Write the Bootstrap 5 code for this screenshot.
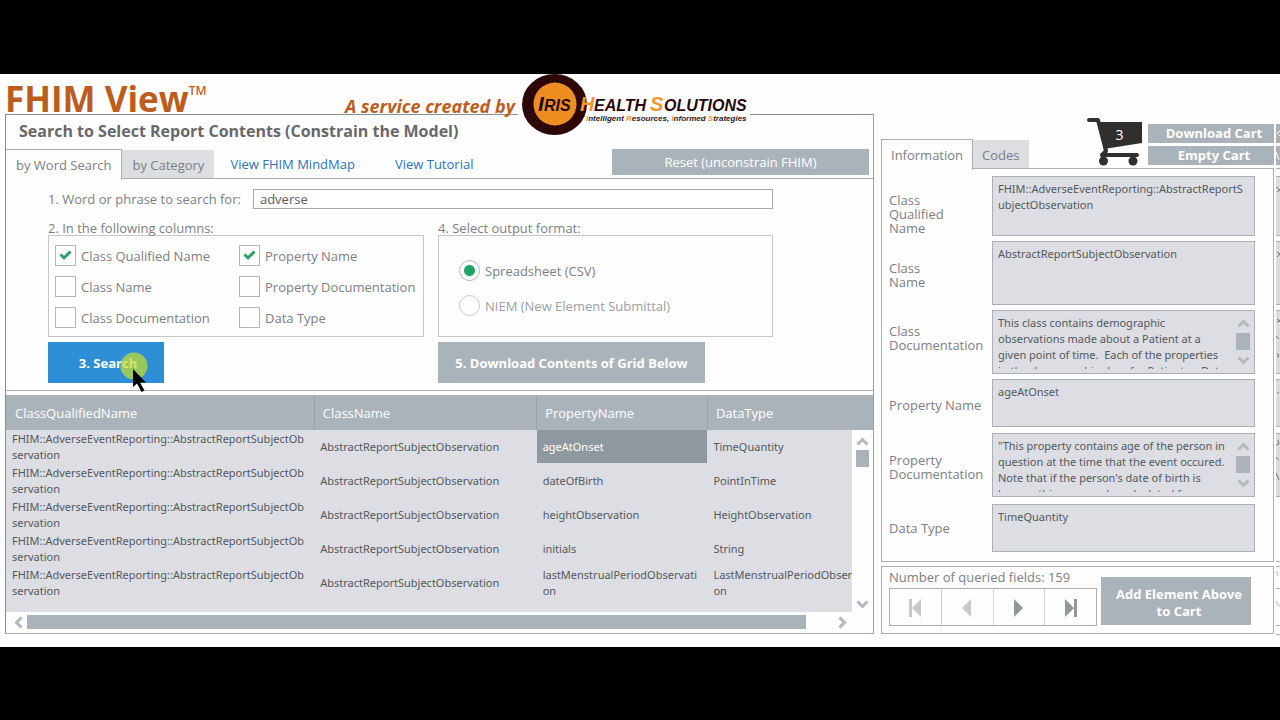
<!DOCTYPE html>
<html lang="en">
<head>
<meta charset="utf-8">
<meta name="viewport" content="width=device-width, initial-scale=1">
<title>FHIM View</title>
<link href="https://cdn.jsdelivr.net/npm/bootstrap@5.3.0/dist/css/bootstrap.min.css" rel="stylesheet">
<style>
  :root { --line:#aab0b5; --bar:#abb3ba; --field:#dcdee3; --ink:#7b7f84; --ui:"Open Sans","Noto Sans",sans-serif; --data:"Noto Sans","Open Sans",sans-serif; }
  body { background:#000; font-family:var(--ui); font-size:13px; line-height:20px; color:var(--ink); }
  .stage { background:#fefefe; display:grid; grid-template-columns:minmax(0,876fr) minmax(0,393fr) 6px; padding-left:5px; padding-bottom:12px; }
  .pane-left { margin-right:7px; }
  .masthead { height:40px; color:#bd5d1d; }
  .masthead h1 { font-size:35px; line-height:50px; font-weight:700; }
  .masthead sup { font-size:12px; font-weight:600; top:-17px; line-height:0; vertical-align:baseline; }
  .tagline { font-size:18px; line-height:64px; font-weight:700; font-style:italic; }
  .masthead svg { margin-left:3px; z-index:2; position:relative; }
  .frame { border:1px solid var(--line); }
  .frame-blue { border-left-color:#7f90ad; border-right-color:#8fa0bd; border-top-color:#8b8f94; }
  .panel-title { font-size:16px; line-height:32px; font-weight:700; color:#66686b; padding:0 0 2px 13px; }
  .view-tabs { height:30px; border-bottom:1px solid var(--line); }
  .view-tabs .nav-link { border:0; padding:0 10px; line-height:30px; color:var(--ink); border-radius:0; margin:0; }
  .view-tabs .nav-link:not(.active) { background:#dcdee2; margin-top:1px; height:28px; }
  .view-tabs .nav-link.active { color:var(--ink); background:#fefefe; border:1px solid var(--line); border-bottom:0; height:31px; line-height:28px; position:relative; }
  .left-tabs .nav-link.active { border-left:0; }
  .right-tabs .nav-link { padding:0 9px; }
  .link-plain { color:#2a74b8; text-decoration:none; line-height:30px; }
  .btn-flat { background:var(--bar); color:#fff; border:0; border-radius:0; padding:0; font-size:13px; line-height:17px; }
  .btn-flat:hover { background:#98a1a9; color:#fff; }
  .btn-search { background:#2f8fd6; width:116px; padding-left:4px; }
  .btn-download { width:267px; }
  .btn-tall { height:41px; padding-top:2px; }
  .btn-reset { height:26px; width:257px; padding-top:2px; }
  .search-pane { height:212px; border-bottom:1px solid var(--line); padding:10px 100px 0 42px; }
  .phrase-row { gap:12px; margin-bottom:10px; }
  .search-pane input[type=text] { height:20px; border:1px solid #a4a8ac; border-radius:0; padding:0 6px; font-size:13px; line-height:18px; color:#5a5d60; min-height:0; }
  .two-up { display:grid; grid-template-columns:376fr 335fr; column-gap:14px; }
  .caption-line { line-height:18px; height:16px; }
  .option-box { border:1px solid #c4c7ca; height:102px; margin-bottom:5px; }
  .checks { display:grid; grid-template-columns:1fr 1fr; grid-auto-rows:31px; padding:9px 0 0 6px; }
  .checks > div, .radios > div { display:flex; gap:5px; align-items:flex-start; white-space:nowrap; }
  .checks input, .radios input { appearance:none; width:21px; height:21px; flex:none; margin:0; border:1px solid #b3b6b9; background:#fefefe center/19px 19px no-repeat; }
  .checks input:checked { background-image:url("data:image/svg+xml,%3Csvg xmlns='http://www.w3.org/2000/svg' viewBox='0 0 19 19'%3E%3Cpath d='M4.500 8.500 8 12 14.500 5.500' fill='none' stroke='%232ca068' stroke-width='3'/%3E%3C/svg%3E"); }
  .radios { padding:24px 0 0 20px; }
  .radios > div { height:35px; }
  .radios input { border-radius:50%; }
  .radios input:checked { background-image:radial-gradient(circle,#22a466 5px,transparent 6px); }
  .checks label, .radios label { line-height:23px; }
  .cursor { position:absolute; left:72px; top:10px; pointer-events:none; }
  .grid-frame { margin-top:4px; }
  .grid-view { overflow:hidden; height:217px; background:var(--field); position:relative; }
  .grid-view table { width:101%; table-layout:fixed; }
  .grid-view th { background:var(--bar); color:#fff; font-weight:400; height:35px; padding:1px 9px 0 8px; vertical-align:middle; border-left:1px solid #9aa3aa; }
  .grid-view th:first-child { border-left:0; padding-left:9px; }
  .grid-view td { font-family:var(--data); font-size:11px; line-height:16px; height:34px; padding:1px 5px 0 6px; vertical-align:middle; color:#55585c; }
  .grid-view td.chosen { background:#8f989f; color:#fff; border-bottom:1px solid var(--field); }
  .v-scroll { position:absolute; right:0; top:35px; bottom:0; width:21px; background:#fefefe; padding:7px 0 3px; }
  .v-scroll .thumb { width:13px; height:17px; background:var(--bar); }
  .h-scroll { height:21px; padding:0 26px 0 8px; }
  .h-scroll .thumb { background:var(--bar); height:14px; width:96%; }
  .chev { fill:none; stroke:#b3b8bd; stroke-width:3; }
  .top-right { height:95px; }
  .cart-buttons { width:126px; gap:3px; }
  .cart-buttons .btn-flat { height:19px; line-height:19px; padding-left:6px; }
  .info-panel { margin-top:-1px; padding:7px 18px 9px 7px; display:grid; gap:5px; }
  .info-row { display:grid; grid-template-columns:103px minmax(0,1fr); align-items:center; }
  .info-row label { line-height:14px; padding-right:6px; }
  .info-lower { display:grid; gap:7px; margin-top:1px; }
  .field { border:1px solid var(--line); background:var(--field); padding:4px 8px 4px 5px; display:flex; }
  .field textarea { border:0; background:none; resize:none; overflow:hidden; padding:0; flex:1; min-width:0; font-family:var(--data); font-size:11px; line-height:16px; color:#55585c; outline:0; word-break:break-all; }
  .field.long { padding:4px 4px 4px 5px; }
  .field.long textarea { word-break:normal; }
  .h60 { height:60px; } .h64 { height:64px; } .h48 { height:48px; }
  .info-foot { margin-top:4px; height:68px; padding:0 22px 0 7px; }
  .pager { width:208px; height:38px; border:1px solid var(--line); margin-top:1px; }
  .pager button { flex:1; border:0; border-left:1px solid #d0d4d8; background:none; padding:0; }
  .pager button:first-child { border-left:0; }
  .add-btn { height:48px; margin-top:10px; width:150px; padding:4px 4px 0 10px; }
</style>
</head>
<body class="d-flex flex-column justify-content-center min-vh-100">
<main class="stage">
  <section class="pane-left">
    <header class="masthead d-flex align-items-start text-nowrap">
      <h1 class="mb-0">FHIM View<sup>TM</sup></h1>
      <div class="tagline ms-auto">A service created by</div>
      <svg width="356" height="62" viewBox="518 74 356 62" role="img" aria-label="Iris Health Solutions" font-family="Liberation Sans, sans-serif" font-weight="700" font-style="italic">
        <rect x="518" y="104" width="232" height="22" fill="#fefefe"/>
        <ellipse cx="554.500" cy="104.500" rx="32.500" ry="30.500" fill="#2d0608"/>
        <circle cx="555" cy="104" r="21.500" fill="#ee8d22"/>
        <g font-size="16" fill="#26080a">
          <text x="538" y="111" font-size="21">I</text><text x="544" y="111">RIS</text>
          <text x="580" y="111" font-size="20" fill="#f0962e">H</text><text x="594" y="111">EALTH</text>
          <text x="650" y="111" font-size="20" fill="#f0962e">S</text><text x="664" y="111">OLUTIONS</text>
        </g>
        <text x="586" y="121" font-size="8" fill="#2d1a1c"><tspan fill="#f0962e">I</tspan>ntelligent <tspan fill="#f0962e">R</tspan>esources, <tspan fill="#f0962e">I</tspan>nformed <tspan fill="#f0962e">S</tspan>trategies</text>
      </svg>
    </header>

    <div class="frame frame-blue">
      <h2 class="panel-title mb-0">Search to Select Report Contents (Constrain the Model)</h2>
      <div class="view-tabs left-tabs nav-tabs d-flex">
        <button class="nav-link active" type="button">by Word Search</button>
        <button class="nav-link" type="button">by Category</button>
        <a class="link-plain ms-3 me-4" href="#mindmap">View FHIM MindMap</a>
        <a class="link-plain ms-3" href="#tutorial">View Tutorial</a>
        <button class="btn btn-flat btn-reset ms-auto me-1" type="button">Reset (unconstrain FHIM)</button>
      </div>
      <form class="search-pane">
        <div class="phrase-row d-flex align-items-center">
          <label class="text-nowrap" for="phrase">1. Word or phrase to search for:</label>
          <input class="form-control" type="text" id="phrase" value="adverse">
        </div>
        <div class="two-up">
          <div>
            <div class="caption-line">2. In the following columns:</div>
            <div class="option-box checks">
              <div><input type="checkbox" id="c1" checked><label for="c1">Class Qualified Name</label></div>
              <div><input type="checkbox" id="c2" checked><label for="c2">Property Name</label></div>
              <div><input type="checkbox" id="c3"><label for="c3">Class Name</label></div>
              <div><input type="checkbox" id="c4"><label for="c4">Property Documentation</label></div>
              <div><input type="checkbox" id="c5"><label for="c5">Class Documentation</label></div>
              <div><input type="checkbox" id="c6"><label for="c6">Data Type</label></div>
            </div>
            <div class="position-relative">
              <button class="btn btn-flat btn-search btn-tall fw-bold" type="button">3. Search</button>
              <svg class="cursor" width="32" height="44" viewBox="0 0 32 44" aria-hidden="true">
                <circle cx="14" cy="14" r="13.500" fill="#c3dc2e" fill-opacity=".72"/>
                <path d="M13 17v18l4-3.500 4.500 8.500 3-1.500-4.500-8h6z" fill="#000"/>
              </svg>
            </div>
          </div>
          <div>
            <div class="caption-line">4. Select output format:</div>
            <div class="option-box radios">
              <div><input type="radio" name="fmt" id="r1" checked><label for="r1">Spreadsheet (CSV)</label></div>
              <div class="opacity-75"><input type="radio" name="fmt" id="r2" disabled><label for="r2">NIEM (New Element Submittal)</label></div>
            </div>
            <button class="btn btn-flat btn-download btn-tall fw-bold" type="button">5. Download Contents of Grid Below</button>
          </div>
        </div>
      </form>

      <div class="grid-frame">
        <div class="grid-view">
          <table>
            <colgroup><col style="width:35.200%"><col style="width:25.400%"><col style="width:19.500%"><col></colgroup>
            <thead><tr><th>ClassQualifiedName</th><th>ClassName</th><th>PropertyName</th><th>DataType</th></tr></thead>
            <tbody>
              <tr><td>FHIM::AdverseEventReporting::AbstractReportSubjectOb<wbr>servation</td><td>AbstractReportSubjectObservation</td><td class="chosen">ageAtOnset</td><td>TimeQuantity</td></tr>
              <tr><td>FHIM::AdverseEventReporting::AbstractReportSubjectOb<wbr>servation</td><td>AbstractReportSubjectObservation</td><td>dateOfBirth</td><td>PointInTime</td></tr>
              <tr><td>FHIM::AdverseEventReporting::AbstractReportSubjectOb<wbr>servation</td><td>AbstractReportSubjectObservation</td><td>heightObservation</td><td>HeightObservation</td></tr>
              <tr><td>FHIM::AdverseEventReporting::AbstractReportSubjectOb<wbr>servation</td><td>AbstractReportSubjectObservation</td><td>initials</td><td>String</td></tr>
              <tr><td>FHIM::AdverseEventReporting::AbstractReportSubjectOb<wbr>servation</td><td>AbstractReportSubjectObservation</td><td>lastMenstrualPeriodObservati<wbr>on</td><td>LastMenstrualPeriodObservati<wbr>on</td></tr>
            </tbody>
          </table>
          <div class="v-scroll d-flex flex-column align-items-center">
            <svg class="chev mb-1" width="13" height="9" viewBox="0 0 13 9"><path d="M1.500 7.500l5-5 5 5"/></svg>
            <div class="thumb"></div>
            <svg class="chev mt-auto" width="13" height="9" viewBox="0 0 13 9"><path d="M1.500 1.500l5 5 5-5"/></svg>
          </div>
        </div>
        <div class="h-scroll d-flex align-items-center">
          <svg class="chev flex-shrink-0 me-1" width="9" height="13" viewBox="0 0 9 13"><path d="M7.500 1.500l-5 5 5 5"/></svg>
          <div class="flex-fill"><div class="thumb"></div></div>
          <svg class="chev flex-shrink-0" width="9" height="13" viewBox="0 0 9 13"><path d="M1.500 1.500l5 5-5 5"/></svg>
        </div>
      </div>
    </div>
  </section>

  <section>
    <div class="top-right d-flex align-items-end">
      <div class="view-tabs right-tabs nav-tabs d-flex border-0">
        <button class="nav-link active" type="button">Information</button>
        <button class="nav-link" type="button">Codes</button>
      </div>
      <svg class="ms-auto me-1" width="58" height="51" viewBox="1086 118 58 51" role="img" aria-label="Cart with 3 items">
        <path d="M1089 120h9l8 31-4 4h35" fill="none" stroke="#2f2f2f" stroke-width="4" stroke-linejoin="round" stroke-linecap="round"/>
        <path d="M1099 122h43v21l-38 6z" fill="#2f2f2f"/>
        <path d="M1103 155v5M1133 155v5" stroke="#2f2f2f" stroke-width="3"/>
        <circle cx="1103.500" cy="161" r="4.500" fill="#2f2f2f"/><circle cx="1133" cy="161" r="4.500" fill="#2f2f2f"/>
        <text x="1119.500" y="140" font-size="14" fill="#fff" text-anchor="middle">3</text>
      </svg>
      <div class="cart-buttons d-flex flex-column pb-1">
        <button class="btn btn-flat fw-bold" type="button">Download Cart</button>
        <button class="btn btn-flat fw-bold" type="button">Empty Cart</button>
      </div>
    </div>
    <div class="frame info-panel">
      <div class="info-row"><label class="pt-3" for="f1">Class<br>Qualified<br>Name</label><div class="field h60"><textarea id="f1" readonly>FHIM::AdverseEventReporting::AbstractReportSubjectObservation</textarea></div></div>
      <div class="info-row"><label class="pt-1" for="f2">Class<br>Name</label><div class="field h64"><textarea id="f2" readonly>AbstractReportSubjectObservation</textarea></div></div>
      <div class="info-row"><label class="pb-2" for="f3">Class<br>Documentation</label><div class="field long h64"><textarea id="f3" readonly>This class contains demographic
observations made about a Patient at a
given point of time.  Each of the properties
in the demographic class for Patient or Data</textarea>
        <div class="d-flex flex-column align-items-center justify-content-between py-1"><svg class="chev" width="13" height="9" viewBox="0 0 13 9"><path d="M1.500 7.500l5-5 5 5"/></svg><svg width="14" height="17"><path fill="#abb3ba" d="M0 0h14v17H0z"/></svg><svg class="chev" width="13" height="9" viewBox="0 0 13 9"><path d="M1.500 1.500l5 5 5-5"/></svg></div></div></div>
      <div class="info-row"><label class="pt-1" for="f4">Property Name</label><div class="field h48"><textarea id="f4" readonly>ageAtOnset</textarea></div></div>
      <div class="info-lower">
        <div class="info-row"><label class="pt-1" for="f5">Property<br>Documentation</label><div class="field long h64"><textarea id="f5" readonly>"This property contains age of the person in
question at the time that the event occured.
Note that if the person's date of birth is
known, this may can be calculated from</textarea>
          <div class="d-flex flex-column align-items-center justify-content-between py-1"><svg class="chev" width="13" height="9" viewBox="0 0 13 9"><path d="M1.500 7.500l5-5 5 5"/></svg><svg width="14" height="17"><path fill="#abb3ba" d="M0 0h14v17H0z"/></svg><svg class="chev" width="13" height="9" viewBox="0 0 13 9"><path d="M1.500 1.500l5 5 5-5"/></svg></div></div></div>
        <div class="info-row"><label for="f6">Data Type</label><div class="field h48"><textarea id="f6" readonly>TimeQuantity</textarea></div></div>
      </div>
    </div>
    <div class="frame info-foot d-flex gap-1">
      <div>
        <div>Number of queried fields: 159</div>
        <div class="pager d-flex">
          <button type="button" aria-label="First"><svg width="14" height="18" fill="#c6cacf"><path d="M1 0h3v18H1zM13 0v18L4 9z"/></svg></button>
          <button type="button" aria-label="Previous"><svg width="14" height="18" fill="#c6cacf"><path d="M11 0v18L2 9z"/></svg></button>
          <button type="button" aria-label="Next"><svg width="14" height="18" fill="#8f979f"><path d="M2 0v18l9-9z"/></svg></button>
          <button type="button" aria-label="Last"><svg width="14" height="18" fill="#8f979f"><path d="M10 0h3v18h-3zM1 0v18l9-9z"/></svg></button>
        </div>
      </div>
      <button class="btn btn-flat fw-bold add-btn" type="button">Add Element Above to Cart</button>
    </div>
  </section>

  <svg class="ms-auto" width="4" height="561" viewBox="0 74 4 561" aria-hidden="true">
    <path fill="#b0b0b3" d="M0 124h4v19H0zM0 146h4v19H0z"/>
    <path fill="#dddcdc" stroke="#aab0b5" d="M-1 176.500h6v59h-6zM-1 241.500h6v63h-6zM-1 310.500h6v63h-6zM-1 379.500h6v47h-6zM-1 433.500h6v63h-6z"/>
    <path fill="none" stroke="#aab0b5" d="M0 168.500h4M0 561.500h4M0 566.500h4M0 588.500h4M0 625.500h4M0 634.500h4"/>
    <path fill="none" stroke="#f6f6f6" d="M4 131l-3 2 3 3M0 152l3 8"/>
    <path fill="none" stroke="#6f7275" d="M0 187l4 3-3 2M1 252l3 2-3 3M1 319l3 2-3 1M0 336l3 3M1 353l2 3-2 1M1 393h2M2 440l1 4-3 1M0 457l3 3M0 473l3 7"/>
    <path fill="none" stroke="#b3b8bd" d="M0 571l2 3-1 2M0 601q1 5 4 5"/>
  </svg>
</main>
<script src="https://cdn.jsdelivr.net/npm/bootstrap@5.3.0/dist/js/bootstrap.bundle.min.js"></script>
</body>
</html>
